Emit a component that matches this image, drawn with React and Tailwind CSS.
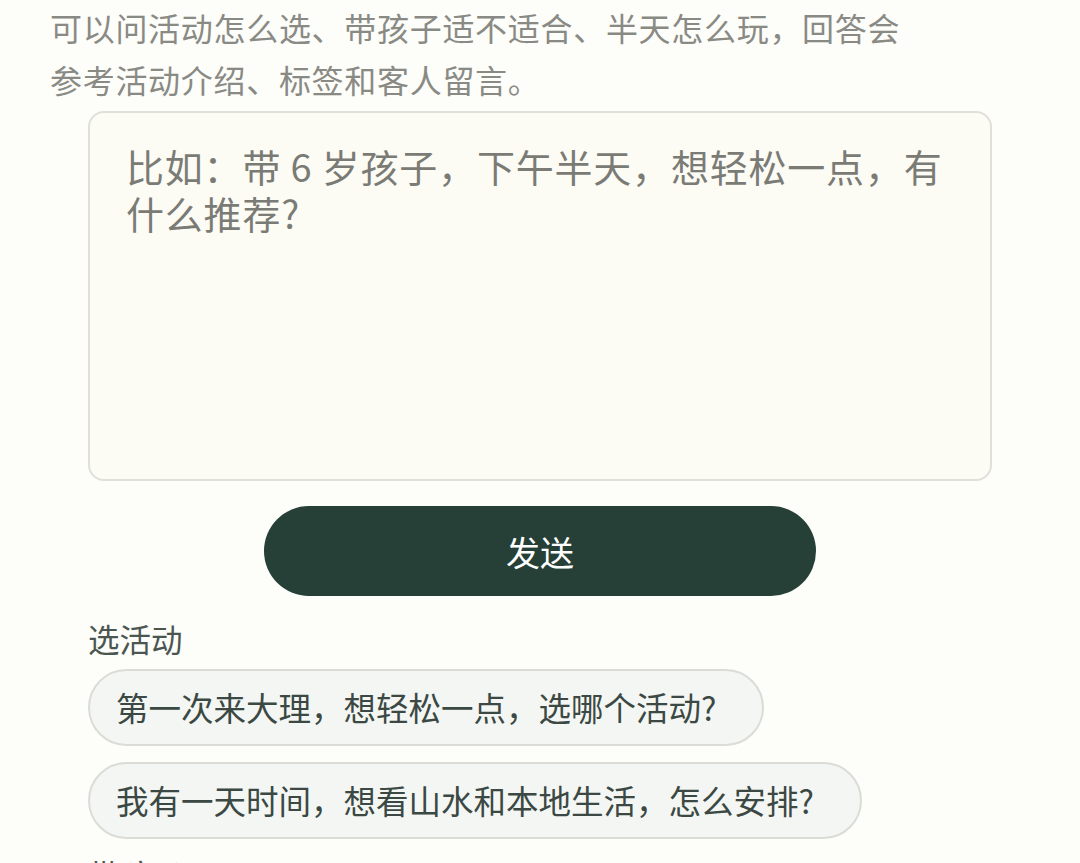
import { useState } from "react";

const font = { fontFamily: '"Noto Sans CJK SC", "Noto Sans", sans-serif' };

const groups = [
  {
    title: "选活动",
    items: [
      "第一次来大理，想轻松一点，选哪个活动?",
      "我有一天时间，想看山水和本地生活，怎么安排?",
    ],
  },
  {
    title: "带孩子",
    items: ["带 6 岁孩子，哪个活动更合适?"],
  },
];

export default function App() {
  const [text, setText] = useState("");

  return (
    <div className="min-h-screen bg-[#fdfdf9] overflow-hidden" style={font}>
      <div className="h-[863px] overflow-hidden">
        <p className="pt-[1px] pl-[50px] text-[32px] leading-[52px] tracking-[0.7px] text-[#8a8a85]">
          可以问活动怎么选、带孩子适不适合、半天怎么玩，回答会
          <br />
          参考活动介绍、标签和客人留言。
        </p>

        <div className="px-[88px] mt-[6px]">
          <textarea
            value={text}
            onChange={(e) => setText(e.target.value)}
            placeholder="比如：带 6 岁孩子，下午半天，想轻松一点，有什么推荐?"
            className="block w-full h-[370px] resize-none rounded-[16px] border-2 border-[#e0e0db] bg-[#fcfcf5] pt-[29px] px-[36px] text-[38px] leading-[47px] tracking-[0.8px] text-[#333] placeholder:text-[#7b7b76] outline-none"
          />

          <div className="flex justify-center mt-[25px]">
            <button className="w-[552px] h-[90px] rounded-full bg-[#263f37] text-white text-[34px]">
              发送
            </button>
          </div>

          {groups.map((g, gi) => (
            <div key={g.title} className={gi === 0 ? "mt-[20px]" : "mt-[13px]"}>
              <h3 className="text-[31.5px] leading-[44px] text-[#4b5651]">{g.title}</h3>
              <div className="mt-[9px] flex flex-col items-start gap-[16px]">
                {g.items.map((q) => (
                  <button
                    key={q}
                    className="h-[77px] rounded-full border-2 border-[#dcdcd6] bg-[#f3f6f2] pl-[26px] pr-[46px] text-[32.5px] text-[#3b4843]"
                  >
                    {q}
                  </button>
                ))}
              </div>
            </div>
          ))}
        </div>
      </div>
    </div>
  );
}
